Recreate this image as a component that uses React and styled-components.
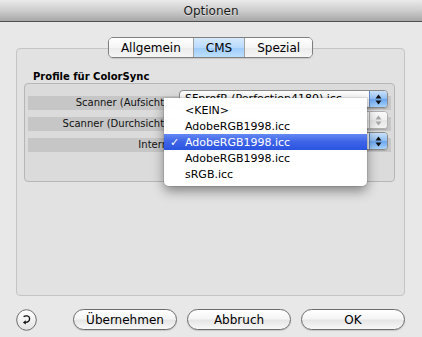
import React from 'react';
import styled, { createGlobalStyle } from 'styled-components';

const GlobalStyle = createGlobalStyle`
  html, body {
    margin: 0;
    padding: 0;
    background: #e8e8e8;
  }
  body {
    font-family: "Lucida Grande", "DejaVu Sans", sans-serif;
    color: #000;
  }
`;

const Window = styled.div`
  width: 422px;
  height: 337px;
  display: flex;
  flex-direction: column;
  background: #e8e8e8;
  overflow: hidden;
`;

const TitleBar = styled.div`
  height: 21px;
  flex-shrink: 0;
  border-bottom: 1px solid #4f4f4f;
  border-radius: 4px 4px 0 0;
  background: linear-gradient(#eaeaea, #cdcdcd 50%, #a8a8a8);
  display: flex;
  align-items: center;
  justify-content: center;
  font-size: 12px;
  color: #1a1a1a;
  text-shadow: 0 1px 0 rgba(255, 255, 255, 0.45);
`;

const Body = styled.div`
  flex: 1;
  display: flex;
  flex-direction: column;
  padding: 15px 17px 7px 16px;
`;

const TabStrip = styled.div`
  align-self: center;
  display: flex;
  height: 21px;
  box-sizing: border-box;
  border: 1px solid #7f7f7f;
  border-radius: 5px;
  overflow: hidden;
  position: relative;
  z-index: 1;
  box-shadow: 0 1px 1px rgba(0, 0, 0, 0.12);
`;

const Tab = styled.div`
  padding: 0 12px;
  display: flex;
  align-items: center;
  font-size: 12px;
  border-left: 1px solid #a2a2a2;
  background: ${({ $active }) =>
    $active
      ? 'linear-gradient(#d6eafd, #b9dafc 50%, #9dcbf9 51%, #bde0fd)'
      : 'linear-gradient(#ffffff, #f5f5f5 50%, #ebebeb 51%, #f6f6f6)'};

  &:first-child {
    border-left: none;
  }
`;

const TabBox = styled.div`
  margin-top: -10px;
  height: 248px;
  box-sizing: border-box;
  border: 1px solid #c4c4c4;
  border-radius: 4px;
  background: #e2e2e2;
  padding: 21px 9px 0 7px;
  display: flex;
  flex-direction: column;
`;

const GroupTitle = styled.div`
  font-size: 10px;
  font-weight: bold;
  line-height: 13px;
  padding-left: 9px;
`;

const GroupBox = styled.div`
  border: 1px solid #b6b6b6;
  border-radius: 4px;
  background: #dbdbdb;
  padding: 6px 3px 29px 3px;
  display: flex;
  flex-direction: column;
  gap: 1px;
`;

const Row = styled.div`
  display: flex;
  height: 20px;
  background: linear-gradient(transparent 6px, #c6c6c6 6px);
`;

const Label = styled.div`
  width: 140px;
  margin-right: 11px;
  align-self: flex-end;
  text-align: right;
  font-size: 10px;
  line-height: 14px;
  white-space: nowrap;
  overflow: hidden;
  color: #111;
`;

const PopupWrap = styled.div`
  position: relative;
  width: 209px;
  height: 18px;
`;

const Popup = styled.div`
  height: 18px;
  box-sizing: border-box;
  border: 1px solid ${({ $disabled }) => ($disabled ? '#b0b0b0' : '#8a8a8a')};
  border-radius: 4px;
  overflow: hidden;
  display: flex;
  background: linear-gradient(#ffffff, #f6f6f6 50%, #ececec 51%, #f8f8f8);
  box-shadow: 0 1px 1px rgba(0, 0, 0, 0.15);
`;

const PopupText = styled.div`
  flex: 1;
  padding-left: 5px;
  font-size: 11px;
  line-height: 16px;
  white-space: nowrap;
  overflow: hidden;
  color: ${({ $disabled }) => ($disabled ? '#a4a4a4' : '#000')};
`;

const PopupArrows = styled.div`
  width: 17px;
  border-left: 1px solid ${({ $disabled }) => ($disabled ? '#b8b8b8' : '#5e87c4')};
  display: flex;
  align-items: center;
  justify-content: center;
  background: ${({ $disabled }) =>
    $disabled
      ? 'linear-gradient(#fafafa, #f0f0f0 50%, #e6e6e6 51%, #f2f2f2)'
      : 'linear-gradient(#c9e1fb, #8fbdf3 50%, #6aa6ef 51%, #a8d2fb)'};
`;

const Menu = styled.div`
  position: absolute;
  left: -15px;
  top: -34px;
  width: 203px;
  padding: 4px 0;
  background: rgba(255, 255, 255, 0.98);
  border-radius: 0 0 5px 5px;
  box-shadow: 0 5px 12px rgba(0, 0, 0, 0.42), 0 0 0 1px rgba(0, 0, 0, 0.08);
  z-index: 10;
`;

const MenuItem = styled.div`
  height: 16px;
  display: flex;
  align-items: center;
  padding-left: 6px;
  font-size: 11px;
  color: ${({ $selected }) => ($selected ? '#fff' : '#000')};
  background: ${({ $selected }) =>
    $selected ? 'linear-gradient(#6488f3, #3d63e6 50%, #2a54e0)' : 'transparent'};
`;

const Check = styled.span`
  width: 15px;
  font-size: 11px;
`;

const Footer = styled.div`
  margin-top: 13px;
  height: 21px;
  display: flex;
  align-items: center;
`;

const HelpButton = styled.div`
  width: 21px;
  height: 22px;
  display: flex;
`;

const Buttons = styled.div`
  margin-left: auto;
  display: flex;
  gap: 10px;
`;

const Button = styled.div`
  width: 104px;
  height: 21px;
  box-sizing: border-box;
  border: 1px solid #6c6c6c;
  border-radius: 11px;
  display: flex;
  align-items: center;
  justify-content: center;
  font-size: 12px;
  background: linear-gradient(#ffffff, #f5f5f5 45%, #e6e6e6 55%, #f8f8f8);
  box-shadow: 0 1px 1px rgba(0, 0, 0, 0.15);
`;

const Arrows = ({ color }) => (
  <svg width="7" height="11" viewBox="0 0 7 11">
    <path d="M3.5 0.5 L6.5 4.5 L0.5 4.5 Z" fill={color} />
    <path d="M3.5 10.5 L6.5 6.5 L0.5 6.5 Z" fill={color} />
  </svg>
);

const HelpIcon = () => (
  <svg width="21" height="22" viewBox="0 0 21 22">
    <defs>
      <linearGradient id="hb" x1="0" y1="0" x2="0" y2="1">
        <stop offset="0" stopColor="#ffffff" />
        <stop offset="0.5" stopColor="#f2f2f2" />
        <stop offset="1" stopColor="#e2e2e2" />
      </linearGradient>
    </defs>
    <ellipse cx="10.5" cy="11" rx="9.8" ry="10.3" fill="url(#hb)" stroke="#6c6c6c" />
    <path
      d="M7.6 7.6 C9.6 6.2 13.6 6.6 13.6 9.6 C13.6 12 11.6 13.4 9.4 13.4"
      fill="none"
      stroke="#111"
      strokeWidth="1.3"
    />
    <path d="M9.8 11.3 L6.9 13.4 L9.8 15.5 Z" fill="#111" />
  </svg>
);

const profile = 'SFprofR (Perfection4180).icc';
const menuItems = ['<KEIN>', 'AdobeRGB1998.icc', 'AdobeRGB1998.icc', 'AdobeRGB1998.icc', 'sRGB.icc'];

const ProfilePopup = ({ value, disabled, children }) => (
  <PopupWrap>
    <Popup $disabled={disabled}>
      <PopupText $disabled={disabled}>{value}</PopupText>
      <PopupArrows $disabled={disabled}>
        <Arrows color={disabled ? '#a8a8a8' : '#111'} />
      </PopupArrows>
    </Popup>
    {children}
  </PopupWrap>
);

export default function App() {
  return (
    <>
      <GlobalStyle />
      <Window>
        <TitleBar>Optionen</TitleBar>
        <Body>
          <TabStrip>
            <Tab>Allgemein</Tab>
            <Tab $active>CMS</Tab>
            <Tab>Spezial</Tab>
          </TabStrip>
          <TabBox>
            <GroupTitle>Profile für ColorSync</GroupTitle>
            <GroupBox>
              <Row>
                <Label>Scanner (Aufsicht)</Label>
                <ProfilePopup value={profile} />
              </Row>
              <Row>
                <Label>Scanner (Durchsicht)</Label>
                <ProfilePopup value={profile} disabled />
              </Row>
              <Row>
                <Label>Intern</Label>
                <ProfilePopup value="AdobeRGB1998.icc">
                  <Menu>
                    {menuItems.map((item, i) => (
                      <MenuItem key={i} $selected={i === 2}>
                        <Check>{i === 2 ? '✓' : ''}</Check>
                        {item}
                      </MenuItem>
                    ))}
                  </Menu>
                </ProfilePopup>
              </Row>
            </GroupBox>
          </TabBox>
          <Footer>
            <HelpButton>
              <HelpIcon />
            </HelpButton>
            <Buttons>
              <Button>Übernehmen</Button>
              <Button>Abbruch</Button>
              <Button>OK</Button>
            </Buttons>
          </Footer>
        </Body>
      </Window>
    </>
  );
}
